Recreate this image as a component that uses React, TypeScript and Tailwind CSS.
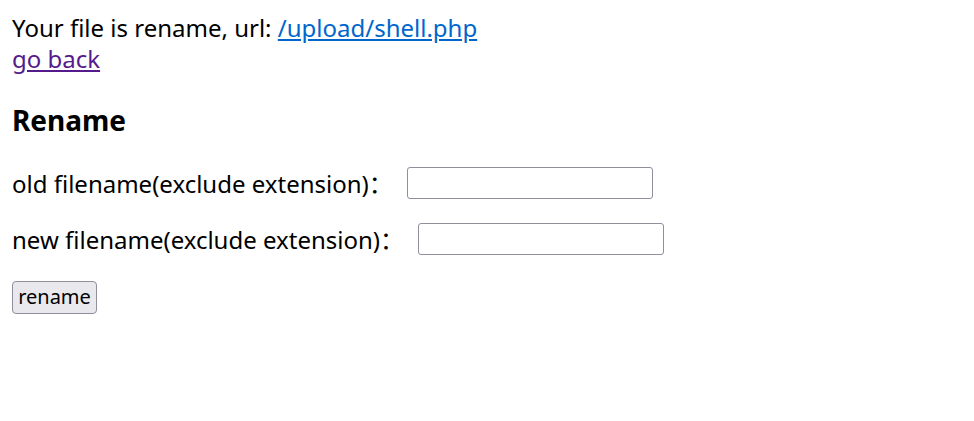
const App = () => {
  return (
    <div className="min-h-screen bg-white p-3 text-[24px] leading-[31px] text-black" style={{ fontFamily: '"Noto Sans", "Noto Sans CJK SC", sans-serif' }}>
      <div>
        Your file is rename, url:{" "}
        <a href="#" className="text-[#0066cc] underline">/upload/shell.php</a>
      </div>
      <div>
        <a href="#" className="text-[#551a8b] underline">go back</a>
      </div>

      <h3 className="mt-7 mb-7 text-[28px] leading-[37px] font-bold">Rename</h3>

      <form>
        <div className="flex items-center h-[32px]">
          <span>old filename(exclude extension)：</span>
          <input className="ml-[14px] w-[246px] h-[32px] rounded-[3px] border border-[#8f8f9d] px-1" />
        </div>
        <div className="mt-6 flex items-center h-[32px]">
          <span>new filename(exclude extension)：</span>
          <input className="ml-[14px] w-[246px] h-[32px] rounded-[3px] border border-[#8f8f9d] px-1" />
        </div>
        <div className="mt-6">
          <button type="button" className="h-[33px] w-[85px] rounded-[4px] border border-[#8f8f9d] bg-[#e9e9ed] text-[20px] leading-[28px]">
            rename
          </button>
        </div>
      </form>
    </div>
  );
};

export default App;
